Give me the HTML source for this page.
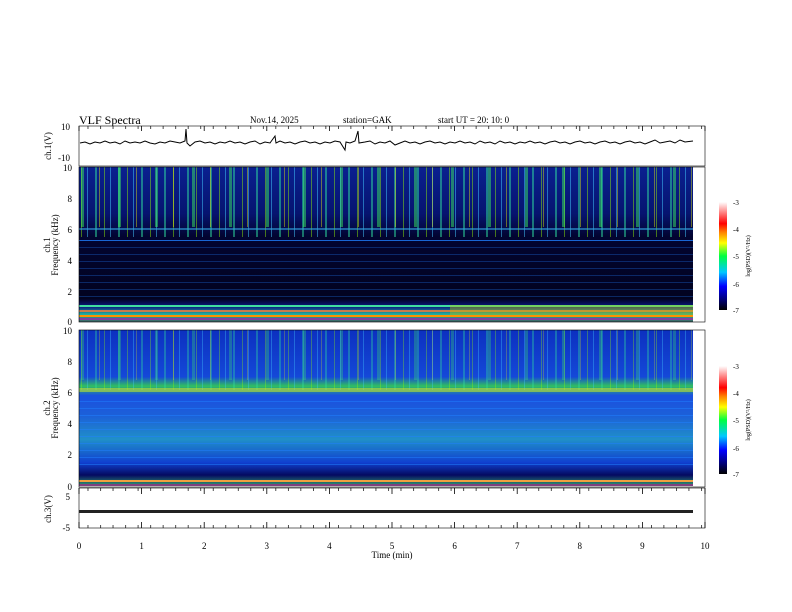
<!DOCTYPE html>
<html><head><meta charset="utf-8"><style>
html,body{margin:0;padding:0;background:#fff;}
svg{display:block;font-family:"Liberation Serif",serif;}
</style></head><body>
<svg width="792" height="612" viewBox="0 0 792 612" xmlns="http://www.w3.org/2000/svg">
<defs>
<linearGradient id="cb" x1="0" y1="1" x2="0" y2="0">
<stop offset="0" stop-color="#000"/><stop offset="0.1" stop-color="#00007a"/><stop offset="0.22" stop-color="#0000ff"/><stop offset="0.35" stop-color="#00c8ff"/><stop offset="0.5" stop-color="#00ff40"/><stop offset="0.62" stop-color="#ffff00"/><stop offset="0.72" stop-color="#ff8000"/><stop offset="0.8" stop-color="#ff0000"/><stop offset="1" stop-color="#fff"/>
</linearGradient>
<linearGradient id="s1" x1="0" y1="0" x2="0" y2="1">
<stop offset="0" stop-color="#0a2090"/><stop offset="0.3" stop-color="#061470"/><stop offset="0.45" stop-color="#020430"/><stop offset="0.85" stop-color="#020320"/><stop offset="0.9" stop-color="#0a1a80"/><stop offset="0.95" stop-color="#20b0a0"/><stop offset="1" stop-color="#406060"/>
</linearGradient>
<linearGradient id="s2" x1="0" y1="0" x2="0" y2="1">
<stop offset="0" stop-color="#0c30c0"/><stop offset="0.3" stop-color="#1448d8"/><stop offset="0.36" stop-color="#30c060"/><stop offset="0.42" stop-color="#1a50e0"/><stop offset="0.55" stop-color="#1c60d8"/><stop offset="0.7" stop-color="#2090c8"/><stop offset="0.85" stop-color="#1040d0"/><stop offset="0.93" stop-color="#050a60"/><stop offset="1" stop-color="#30a070"/>
</linearGradient>
<pattern id="v1" width="23" height="10" patternUnits="userSpaceOnUse"><rect x="3" width="2" height="10" fill="#30e0a0" opacity="0.5"/><rect x="12" width="1" height="10" fill="#9f0" opacity="0.45"/><rect x="18" width="1" height="10" fill="#4cf" opacity="0.5"/></pattern>
<pattern id="v2" width="37" height="10" patternUnits="userSpaceOnUse"><rect x="7" width="3" height="10" fill="#40ff60" opacity="0.45"/><rect x="25" width="1" height="10" fill="#ff0" opacity="0.4"/></pattern>
<pattern id="h1" width="10" height="7" patternUnits="userSpaceOnUse"><rect y="2" width="10" height="1" fill="#2080ff" opacity="0.5"/></pattern>
<pattern id="mt" width="12.52" height="10" patternUnits="userSpaceOnUse"><rect width="0.7" height="10" fill="#000"/></pattern>
</defs>
<text x="79" y="124" font-size="12">VLF  Spectra</text>
<text x="250" y="123" font-size="9">Nov.14, 2025</text>
<text x="343" y="123" font-size="9">station=GAK</text>
<text x="438" y="123" font-size="9">start  UT =   20: 10: 0</text>
<!-- ch1 -->
<rect x="79" y="126" width="626" height="40" fill="#fff" stroke="#000" stroke-width="0.6"/>
<polyline fill="none" stroke="#000" stroke-width="1" points="80,143 85,142 90,144 95,142 100,143 105,141 110,143 115,142 120,144 125,141 130,143 135,142 140,143 145,141 150,143 155,144 160,142 165,143 170,141 175,142 180,143 185,141 186,129 187,143 190,146 195,142 200,141 205,143 210,142 215,144 220,142 225,143 230,141 235,143 240,142 245,144 250,142 255,141 260,144 265,142 270,143 275,136 276,143 280,141 285,143 290,142 295,144 300,142 305,141 310,143 315,142 320,144 325,142 330,143 335,141 340,142 345,150 346,142 350,143 355,141 358,131 359,143 365,142 370,141 375,144 380,142 385,143 390,141 395,145 400,143 405,141 410,143 415,142 420,144 425,142 430,141 435,143 440,142 445,144 450,142 455,143 460,141 465,143 470,142 475,144 480,141 485,143 490,142 495,144 500,141 505,143 510,142 515,144 520,142 525,143 530,141 535,143 540,142 545,144 550,142 555,141 560,143 565,142 570,144 575,142 580,141 585,143 590,142 595,144 600,142 605,141 610,143 615,142 620,144 625,142 630,141 635,143 640,142 645,144 650,142 655,140 660,143 665,142 670,141 675,143 680,140 685,142 693,141"/>
<rect x="79" y="126" width="626" height="3" fill="url(#mt)"/>
<text x="70" y="130" font-size="9" text-anchor="end">10</text>
<text x="70" y="161" font-size="9" text-anchor="end">-10</text>
<text transform="translate(51,146) rotate(-90)" font-size="9" text-anchor="middle">ch.1(V)</text>
<!-- spectrogram 1 -->
<rect x="79" y="167" width="614" height="155" fill="url(#s1)"/>
<rect x="79" y="167" width="614" height="70" fill="url(#v1)"/>
<rect x="79" y="167" width="614" height="60" fill="url(#v2)"/>
<rect x="79" y="237" width="614" height="60" fill="url(#h1)" opacity="0.6"/>
<rect x="79" y="228" width="614" height="2" fill="#30a0e0" opacity="0.6"/>
<rect x="79" y="240" width="614" height="1" fill="#2080ff" opacity="0.7"/>
<rect x="79" y="305" width="614" height="2" fill="#40e0a0"/>
<rect x="79" y="310" width="614" height="2" fill="#f08040" opacity="0.8"/>
<rect x="79" y="315" width="614" height="2" fill="#ff9000"/>
<rect x="79" y="318" width="614" height="2" fill="#8040a0"/>
<rect x="450" y="305" width="243" height="10" fill="#c0c000" opacity="0.4"/>
<rect x="79" y="167" width="626" height="155" fill="none" stroke="#000" stroke-width="0.6"/>
<g font-size="9" text-anchor="end"><text x="72" y="171">10</text><text x="72" y="202">8</text><text x="72" y="233">6</text><text x="72" y="264">4</text><text x="72" y="295">2</text><text x="72" y="325">0</text></g>
<text transform="translate(50,245) rotate(-90)" font-size="9" text-anchor="middle">ch.1</text>
<text transform="translate(58,245) rotate(-90)" font-size="9" text-anchor="middle">Frequency  (kHz)</text>
<!-- spectrogram 2 -->
<rect x="79" y="330" width="614" height="156" fill="url(#s2)"/>
<rect x="79" y="330" width="614" height="60" fill="url(#v1)" opacity="0.7"/>
<rect x="79" y="330" width="614" height="50" fill="url(#v2)" opacity="0.6"/>
<rect x="79" y="388" width="614" height="4" fill="#c0e030" opacity="0.6"/>
<rect x="79" y="400" width="614" height="70" fill="url(#h1)"/>
<rect x="79" y="480" width="614" height="2" fill="#f0a040"/>
<rect x="79" y="484" width="614" height="2" fill="#804080"/>
<rect x="79" y="330" width="626" height="157" fill="none" stroke="#000" stroke-width="0.6"/>
<g font-size="9" text-anchor="end"><text x="72" y="334">10</text><text x="72" y="365">8</text><text x="72" y="396">6</text><text x="72" y="427">4</text><text x="72" y="458">2</text><text x="72" y="490">0</text></g>
<text transform="translate(50,408) rotate(-90)" font-size="9" text-anchor="middle">ch.2</text>
<text transform="translate(58,408) rotate(-90)" font-size="9" text-anchor="middle">Frequency  (kHz)</text>
<!-- ch3 -->
<rect x="79" y="488" width="626" height="40" fill="#fff" stroke="#000" stroke-width="0.6"/>
<rect x="79" y="510" width="614" height="3" fill="#222"/>
<rect x="79" y="488" width="626" height="3" fill="url(#mt)"/>
<rect x="79" y="525" width="626" height="3" fill="url(#mt)"/>
<text x="70" y="500" font-size="9" text-anchor="end">5</text>
<text x="70" y="531" font-size="9" text-anchor="end">-5</text>
<text transform="translate(51,509) rotate(-90)" font-size="9" text-anchor="middle">ch.3(V)</text>
<!-- ticks -->
<g stroke="#000" stroke-width="0.8">
<path d="M79 126v5M141.6 126v5M204.2 126v5M266.8 126v5M329.4 126v5M392 126v5M454.6 126v5M517.2 126v5M579.8 126v5M642.4 126v5M705 126v5"/>
<path d="M79 528v-6M141.6 528v-6M204.2 528v-6M266.8 528v-6M329.4 528v-6M392 528v-6M454.6 528v-6M517.2 528v-6M579.8 528v-6M642.4 528v-6M705 528v-6"/>
<path d="M79 488v6M141.6 488v6M204.2 488v6M266.8 488v6M329.4 488v6M392 488v6M454.6 488v6M517.2 488v6M579.8 488v6M642.4 488v6M705 488v6"/>
</g>
<g font-size="9" text-anchor="middle"><text x="79" y="549">0</text><text x="141.6" y="549">1</text><text x="204.2" y="549">2</text><text x="266.8" y="549">3</text><text x="329.4" y="549">4</text><text x="392" y="549">5</text><text x="454.6" y="549">6</text><text x="517.2" y="549">7</text><text x="579.8" y="549">8</text><text x="642.4" y="549">9</text><text x="705" y="549">10</text></g>
<text x="392" y="558" font-size="9" text-anchor="middle">Time  (min)</text>
<!-- colorbars -->
<rect x="719" y="202" width="8" height="108" fill="url(#cb)"/>
<g font-size="7"><text x="733" y="205">-3</text><text x="733" y="232">-4</text><text x="733" y="259">-5</text><text x="733" y="287">-6</text><text x="733" y="313">-7</text></g>
<text transform="translate(750,256) rotate(-90)" font-size="6" text-anchor="middle">log(PSD)(V²/Hz)</text>
<rect x="719" y="366" width="8" height="108" fill="url(#cb)"/>
<g font-size="7"><text x="733" y="369">-3</text><text x="733" y="396">-4</text><text x="733" y="423">-5</text><text x="733" y="451">-6</text><text x="733" y="477">-7</text></g>
<text transform="translate(750,420) rotate(-90)" font-size="6" text-anchor="middle">log(PSD)(V²/Hz)</text>
</svg>
</body></html>
